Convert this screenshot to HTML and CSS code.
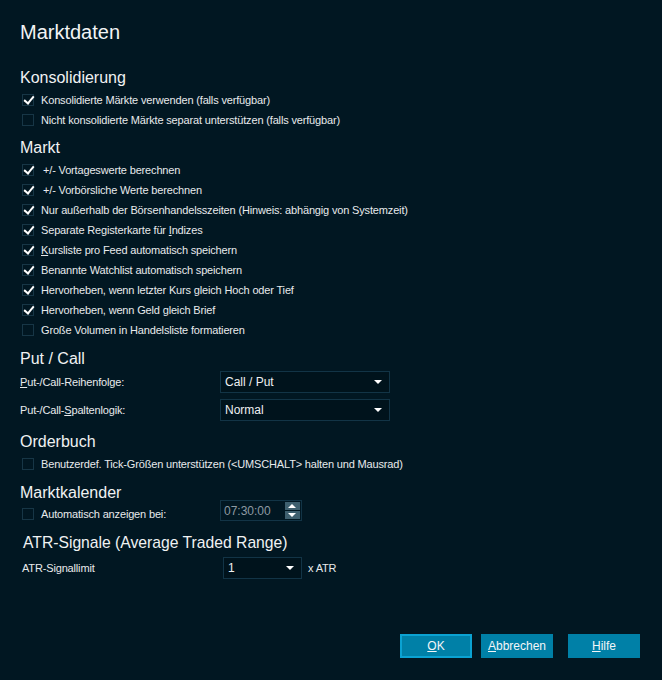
FILE: index.html
```html
<!DOCTYPE html>
<html lang="de">
<head>
<meta charset="utf-8">
<title>Marktdaten</title>
<link rel="stylesheet" href="styles.css">
</head>
<body>
<div class="dialog">
  <h1 class="title">Marktdaten</h1>

  <section class="sec sec-kons">
    <h2 class="head">Konsolidierung</h2>
    <div class="row"><span class="cb on"></span><span>Konsolidierte Märkte verwenden (falls verfügbar)</span></div>
    <div class="row"><span class="cb"></span><span>Nicht konsolidierte Märkte separat unterstützen (falls verfügbar)</span></div>
  </section>

  <section class="sec sec-markt">
    <h2 class="head">Markt</h2>
    <div class="row"><span class="cb on"></span><span class="ind">+/- Vortageswerte berechnen</span></div>
    <div class="row"><span class="cb on"></span><span class="ind">+/- Vorbörsliche Werte berechnen</span></div>
    <div class="row"><span class="cb on"></span><span>Nur außerhalb der Börsenhandelsszeiten (Hinweis: abhängig von Systemzeit)</span></div>
    <div class="row"><span class="cb on"></span><span>Separate Registerkarte für <u>I</u>ndizes</span></div>
    <div class="row"><span class="cb on"></span><span><u>K</u>ursliste pro Feed automatisch speichern</span></div>
    <div class="row"><span class="cb on"></span><span>Benannte Watchlist automatisch speichern</span></div>
    <div class="row"><span class="cb on"></span><span>Hervorheben, wenn letzter Kurs gleich Hoch oder Tief</span></div>
    <div class="row"><span class="cb on"></span><span>Hervorheben, wenn Geld gleich Brief</span></div>
    <div class="row"><span class="cb"></span><span>Große Volumen in Handelsliste formatieren</span></div>
  </section>

  <section class="sec sec-put">
    <h2 class="head">Put / Call</h2>
    <div class="frow">
      <span class="lbl"><u>P</u>ut-/Call-Reihenfolge:</span>
      <div class="select"><span>Call / Put</span><span class="arrow"></span></div>
    </div>
    <div class="frow">
      <span class="lbl">Put-/Call-<u>S</u>paltenlogik:</span>
      <div class="select"><span>Normal</span><span class="arrow"></span></div>
    </div>
  </section>

  <section class="sec sec-order">
    <h2 class="head">Orderbuch</h2>
    <div class="row"><span class="cb"></span><span>Benutzerdef. Tick-Größen unterstützen (&lt;UMSCHALT&gt; halten und Mausrad)</span></div>
  </section>

  <section class="sec sec-kal">
    <h2 class="head">Marktkalender</h2>
    <div class="krow">
      <div class="row klabel"><span class="cb"></span><span>Automatisch anzeigen bei:</span></div>
      <div class="spin">
        <span class="spin-val">07:30:00</span>
        <span class="spin-btns"><span class="sb up"></span><span class="sb down"></span></span>
      </div>
    </div>
  </section>

  <section class="sec sec-atr">
    <h2 class="head atr-head">ATR-Signale (Average Traded Range)</h2>
    <div class="arow">
      <span class="albl">ATR-Signallimit</span>
      <div class="select small"><span>1</span><span class="arrow"></span></div>
      <span class="unit">x ATR</span>
    </div>
  </section>

  <div class="buttons">
    <button class="btn default"><u>O</u>K</button>
    <button class="btn"><u>A</u>bbrechen</button>
    <button class="btn help"><u>H</u>ilfe</button>
  </div>
</div>
</body>
</html>
```

FILE: styles.css
```css
html, body {
  margin: 0;
  padding: 0;
  background: #011722;
}
body {
  width: 662px;
  height: 680px;
  overflow: hidden;
  font-family: "Liberation Sans", Arial, sans-serif;
  font-size: 11px;
  letter-spacing: -0.16px;
  color: #e8eaec;
}
.dialog {
  padding: 20px 22px 0 20px;
  display: flex;
  flex-direction: column;
  height: 680px;
  box-sizing: border-box;
}
.title {
  margin: 0;
  font-weight: normal;
  font-size: 20px;
  line-height: 24px;
  letter-spacing: 0;
  color: #f2f4f5;
}
.sec { display: flex; flex-direction: column; }
.head {
  margin: 0 0 1px 0;
  font-weight: normal;
  font-size: 16px;
  line-height: 22px;
  letter-spacing: 0;
  color: #f0f2f3;
}
.sec-kons { margin-top: 23px; }
.sec-markt { margin-top: 7px; }
.sec-put { margin-top: 8px; }
.sec-order { margin-top: 10px; }
.sec-kal { margin-top: 8px; }
.sec-atr { margin-top: 8px; }

.row {
  display: flex;
  align-items: center;
  height: 20px;
  padding-left: 2px;
}
.cb {
  width: 10px;
  height: 10px;
  border: 1px solid #173646;
  margin-right: 7px;
  flex: none;
  position: relative;
}
.cb.on::after {
  content: "";
  position: absolute;
  left: 3px;
  top: -1px;
  width: 4px;
  height: 8px;
  border: solid #ffffff;
  border-width: 0 2.5px 2.5px 0;
  transform: rotate(40deg);
}
.ind { margin-left: 2px; }

.frow {
  display: grid;
  grid-template-columns: 200px 170px;
  align-items: center;
  height: 22px;
  margin-bottom: 6px;
}
.frow:last-child { margin-bottom: 0; }
.select {
  height: 20px;
  border: 1px solid #123446;
  background: #00131c;
  display: flex;
  align-items: center;
  justify-content: space-between;
  padding: 0 4px 0 4px;
  font-size: 12px;
  letter-spacing: 0;
  color: #eef0f2;
}
.arrow {
  width: 0;
  height: 0;
  border-left: 4px solid transparent;
  border-right: 4px solid transparent;
  border-top: 4px solid #ffffff;
  margin-right: 3px;
}

.krow {
  display: flex;
  align-items: flex-start;
}
.klabel { width: 198px; margin-top: -1px; }
.spin {
  width: 77px;
  height: 19px;
  border: 1px solid #123446;
  display: flex;
  align-items: center;
  justify-content: space-between;
  padding-left: 3px;
  margin-top: -5px;
  font-size: 12px;
  letter-spacing: 0;
  color: #8e9aa2;
}
.spin-btns {
  display: flex;
  flex-direction: column;
  gap: 1px;
  margin-right: 1px;
}
.sb {
  width: 15px;
  height: 8px;
  background: #3e5f6e;
  position: relative;
}
.sb::after {
  content: "";
  position: absolute;
  left: 3px;
  border-left: 4.5px solid transparent;
  border-right: 4.5px solid transparent;
}
.sb.up::after { top: 2px; border-bottom: 4px solid #ffffff; }
.sb.down::after { top: 2px; border-top: 4px solid #ffffff; }

.atr-head {
  font-size: 15.7px;
  margin-left: 3px;
}
.arow {
  display: flex;
  align-items: center;
  height: 22px;
  margin-top: 2px;
  padding-left: 2px;
}
.albl { width: 201px; }
.select.small { width: 69px; }
.unit { margin-left: 6px; }

.buttons {
  margin-top: auto;
  margin-bottom: 22px;
  display: flex;
  justify-content: flex-end;
  gap: 9px;
}
.btn {
  width: 72px;
  height: 24px;
  border: 2px solid #0080a7;
  background: #0080a7;
  color: #f2f6f8;
  font-family: "Liberation Sans", Arial, sans-serif;
  font-size: 12px;
  padding: 0;
}
.btn.default { border-color: #0ba2d2; }
.btn.help { margin-left: 6px; }
```
